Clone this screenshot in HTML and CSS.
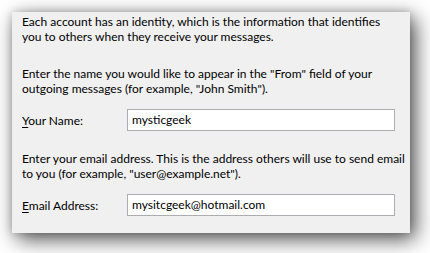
FILE: index.html
```html
<!DOCTYPE html>
<html>
<head>
<meta charset="utf-8">
<link rel="stylesheet" href="styles.css">
</head>
<body>
<div class="panel">
  <p class="para first">Each account has an identity, which is the information that identifies<br>you to others when they receive your messages.</p>
  <p class="para">Enter the name you would like to appear in the "From" field of your<br>outgoing messages (for example, "John Smith").</p>
  <div class="row">
    <label class="label"><u>Y</u>our Name:</label>
    <div class="field">mysticgeek</div>
  </div>
  <p class="para gap">Enter your email address. This is the address others will use to send email<br>to you (for example, "user@example.net").</p>
  <div class="row">
    <label class="label"><u>E</u>mail Address:</label>
    <div class="field">mysitcgeek@hotmail.com</div>
  </div>
</div>
</body>
</html>
```
FILE: styles.css
```css
html, body {
  margin: 0;
  padding: 0;
  background: #ffffff;
}
body {
  width: 430px;
  height: 253px;
  overflow: hidden;
  font-family: Lato, "Noto Sans", sans-serif;
  font-size: 12px;
  color: #000;
}
.panel {
  margin: 12px 0 0 12px;
  width: 388px;
  height: 219px;
  padding: 2px 0 0 10px;
  background: #f0f0f0;
  box-shadow: 5px 6px 20px rgba(0, 0, 0, 0.7), 0 0 8px rgba(0, 0, 0, 0.18);
  display: flex;
  flex-direction: column;
}
.para {
  margin: 0;
  line-height: 15px;
  white-space: nowrap;
}
.para.first {
  margin-bottom: 22px;
}
.para.gap {
  margin-top: 20px;
}
.row {
  display: flex;
  align-items: center;
  margin-top: 13px;
}
.label {
  width: 105px;
  line-height: 15px;
}
.label u {
  text-decoration-thickness: 1px;
  text-underline-offset: 2px;
}
.field {
  box-sizing: border-box;
  width: 268px;
  height: 22px;
  border: 1px solid #abadb3;
  background: #fff;
  padding: 0 4px;
  line-height: 20px;
}
```
